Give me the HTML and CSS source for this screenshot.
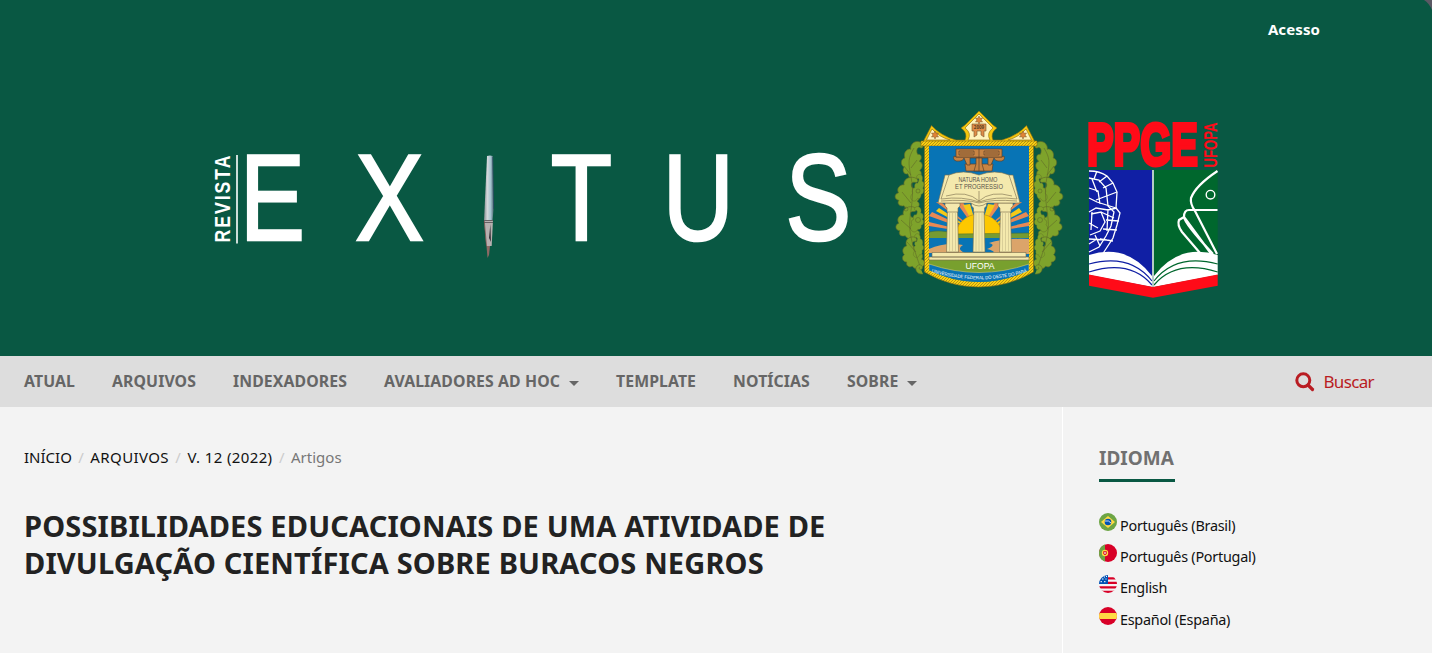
FILE: index.html
```html
<!DOCTYPE html>
<html lang="pt-BR">
<head>
<meta charset="utf-8">
<title>Revista Exitus</title>
<link rel="stylesheet" href="styles.css">
</head>
<body>
<header class="header">
  <svg class="corner" viewBox="0 0 8 10"><path d="M0 0H8V10Q5 3 0 0Z" fill="#5a5964"/></svg>
  <div class="user"><a>Acesso</a></div>
  <svg class="banner" viewBox="200 100 1030 210">
    <defs>
      <linearGradient id="pen"><stop offset="0" stop-color="#858d90"/><stop offset=".35" stop-color="#d5d8dc"/><stop offset=".7" stop-color="#a5c4d0"/><stop offset="1" stop-color="#536f78"/></linearGradient>
      <pattern id="rope" width="3" height="3" patternUnits="userSpaceOnUse"><rect width="3" height="3" fill="#f9cf12"/><path d="M0 3L3 0" stroke="#8a6d16" stroke-width=".6"/></pattern>
      <clipPath id="shield"><path d="M929 146H1029V270Q1005 282 979 282Q953 282 929 270Z"/></clipPath>
      <path id="leaf" d="M0 0C-5 2-8-1-9-4C-13-3-15-7-13-10C-17-11-17-17-13-18C-15-23-11-27-8-26C-9-31-4-35 1-33C5-31 4-27 1-28C-2-29-3-25-1-22C3-23 4-18 1-16C5-15 5-10 2-8C5-6 4-1 0 0Z"/>
      <g id="leaves" fill="#7ea32b" stroke="#5f6c28" stroke-width=".6">
        <use href="#leaf" transform="translate(917 179) rotate(4) scale(1.050 1.120)"/>
        <use href="#leaf" transform="translate(915 209) rotate(-3) scale(1.200 .95)"/>
        <use href="#leaf" transform="translate(916 238) rotate(-8) scale(1.150 .95)"/>
        <use href="#leaf" transform="translate(922 267) rotate(-18) scale(1 .95)"/>
        <use href="#leaf" transform="translate(912 200) rotate(16) scale(-.55 .8)"/>
        <use href="#leaf" transform="translate(912 231) rotate(12) scale(-.6 .75)"/>
        <use href="#leaf" transform="translate(915 257) rotate(4) scale(-.5 .7)"/>
        <path d="M921 269C914 249 908 234 910 218S914 192 911 177S908 158 914 148M911 175L904 166M911 168L917 160M911 203L902 192M911 229L901 220M916 252L907 242" fill="none"/>
        <circle cx="918" cy="220" r="2.500"/><circle cx="906" cy="209" r="2" fill="none"/><circle cx="918" cy="191" r="2"/>
        <path d="M923 274C917 275 914 269 917 266C920 263 924 266 922 269C920 271 918 268 920 267"/>
      </g>
      <path id="star" d="M0-4L1-1.700 3.500-2 2 0 3.500 2 1 1.700 0 4-1 1.700-3.500 2-2 0-3.500-2-1-1.700Z" fill="#e18335" stroke="#76552d" stroke-width=".5"/>
      <path id="ribbonline" d="M929.500 271.500Q979 287 1029 271.500"/>
    </defs>
    <g class="wordmark">
      <text transform="translate(272.300 239.800) scale(.79 1)">E</text>
      <text transform="translate(389.500 239.800) scale(.83 1)">X</text>
      <text transform="translate(581.300 239.800) scale(.815 1)">T</text>
      <text transform="translate(698.200 239.800) scale(.8 1)">U</text>
      <text transform="translate(818.300 239.800) scale(.8 1)">S</text>
    </g>
    <text class="revista" transform="translate(229.500 242.500) rotate(-90) scale(.785 1)">REVISTA</text>
    <path d="M237 155V243.500" stroke="#fff" stroke-width="1.600"/>
    <path d="M487 156Q490 155 492.700 156L493.500 210 492.500 221H484Z" fill="url(#pen)"/>
    <path d="M484 220H493L491.700 246H486.300Z" fill="#b7b0b0"/>
    <path d="M484 220.500H493M484 222.500H493" stroke="#433e43" stroke-width=".7"/>
    <path d="M490.400 224L491 242 489 238Z" fill="#38353b"/>
    <path d="M486.500 246H490L489 255 487.500 258Z" fill="#8d6964"/>
    <path d="M492.700 157L493.600 209" stroke="#314b67" stroke-width=".8"/>
    <path d="M484.300 221L486.500 246" stroke="#7b4745" stroke-width=".7"/>

    <use href="#leaves"/><use href="#leaves" transform="translate(1958 0) scale(-1 1)"/>
    <g stroke="#8b6b13" stroke-width=".6">
      <path d="M923 142L931.500 125.500Q941 136 956 140H965Q968 133 961 128L965 125 979 111 993 125 997 128Q990 133 993 140H1002Q1017 136 1026.500 125.500L1035 142Z" fill="#f5c70e"/>
      <path d="M926.500 140L932 129Q939 137 950 140ZM968 140Q972 133 965 128L979 114 993 128Q986 133 990 140ZM1031.500 140L1026 129Q1019 137 1008 140Z" fill="#fff3bb"/>
      <path d="M924.500 144H1033.500V272Q1008 287 979 287Q950 287 924.500 272Z" fill="url(#rope)"/>
      <path d="M921 141H1037V146H921Z" fill="url(#rope)"/>
    </g>
    <use href="#star" x="935" y="135"/><use href="#star" x="1023" y="135"/><use href="#star" x="979" y="120"/>
    <path d="M972 124H986V131H984V137L981 135V131H977V135L974 137V131H972Z" fill="#df8c48" stroke="#76552d" stroke-width=".6"/>
    <text x="979" y="129.300" text-anchor="middle" font-size="4.500" font-weight="bold" fill="#583f22">2009</text>
    <g clip-path="url(#shield)">
      <path d="M929 146H1029V290H929Z" fill="#0874b5"/>
      <g fill="#e98954"><path d="M979 234L929 216 932 212Z"/><path d="M979 234L936 202 941 202Z"/><path d="M979 234L956 202 963 202Z"/><path d="M979 234L975 202 983 202Z"/><path d="M979 234L995 202 1002 202Z"/><path d="M979 234L1017 202 1022 202Z"/><path d="M979 234L1026 212 1029 216Z"/><path d="M979 234L929 226 929 222Z"/><path d="M979 234L1029 222V226Z"/></g>
      <g fill="#f7c917"><path d="M979 234L936 211 939 208Z"/><path d="M979 234L963 205 970 204Z"/><path d="M979 234L988 204 995 205Z"/><path d="M979 234L1019 208 1022 212Z"/></g>
      <circle cx="979" cy="238" r="24" fill="#fdc800" stroke="#9a7d2a" stroke-width=".5"/>
      <path d="M929 232Q942 229 955 234L1029 233V239H929Z" fill="#769b32" stroke="#4c6c26" stroke-width=".5"/>
      <path d="M929 238H1029V255H929Z" fill="#0874b5"/>
      <path d="M929 249Q945 242 963 245Q956 249 965 253H929ZM1029 239Q1003 238 989 243Q997 245 987 249Q999 252 990 254H1029Z" fill="#dba46a"/>
      <path d="M929 260H1029V275Q979 289 929 275Z" fill="#78a02e"/>
      <path d="M929 264Q979 281 1029 264V288H929Z" fill="#0874b5" stroke="#f1d66f" stroke-width=".5"/>
    </g>
    <g fill="#f4e9ad" stroke="#76694a" stroke-width=".6">
      <path d="M929 257H1029V260H929ZM932 252.500H1026V257H932Z"/>
      <path d="M947.500 207H957.500L958.500 252H946.500ZM974 207H984L985 252H973ZM1000.500 207H1010.500L1011.500 252H999.500Z"/>
      <path d="M945 203H960V206L958 208V212H947V208L945 206ZM971.500 203H986.500V206L984.500 208V212H973.500V208L971.500 206ZM998 203H1013V206L1011 208V212H1000V208L998 206Z"/>
      <path d="M949.500 213V251M952.500 213V251M955.500 213V251M976 213V251M979 213V251M982 213V251M1002.500 213V251M1005.500 213V251M1008.500 213V251" opacity=".35"/>
      <path d="M945 175L938 203H971Q979 209 987 203H1020L1013 175H1009Q995 169 979 175Q963 169 949 175Z"/>
      <path d="M949 175L941 199Q963 196 979 202Q995 196 1017 199L1009 175M941 201Q966 199 979 203Q992 199 1017 201M979 191V202M946 196Q967 190 979 201Q991 190 1012 196" fill="none"/>
    </g>
    <g fill="#c88443" stroke="#59412d" stroke-width=".7">
      <path d="M965 164H993L992 171H966Z"/>
      <path d="M954 156Q952 162 960 161Q963 161 964 158L967 165H970V158H988V165H991L994 158Q995 161 998 161Q1006 162 1004 156L1002 157H956Z"/>
      <path d="M956 149H1002V157H956Z"/><path d="M976 158H982V164L984 171H974L976 164Z"/>
      <path d="M959 151H974V155H959ZM984 151H999V155H984ZM960 153H973M985 153H998M979 149V171" fill="none"/>
    </g>
    <g font-family="Liberation Sans, sans-serif" fill="#56534a" font-size="6.500"><text x="958.500" y="181.500" textLength="39" lengthAdjust="spacingAndGlyphs">NATURA HOMO</text><text x="955" y="188.500" textLength="48" lengthAdjust="spacingAndGlyphs">ET PROGRESSIO</text></g>
    <text class="ufopa-label" x="965.500" y="269" textLength="29" lengthAdjust="spacingAndGlyphs">UFOPA</text>
    <text class="ribbon"><textPath href="#ribbonline" startOffset="2" textLength="97" lengthAdjust="spacingAndGlyphs">UNIVERSIDADE FEDERAL DO OESTE DO PARÁ</textPath></text>

    <text class="ppge" transform="translate(1087 164.800) scale(.665 1)">PPGE</text>
    <text class="side-label" transform="translate(1217 167.500) rotate(-90)" textLength="45" lengthAdjust="spacingAndGlyphs">UFOPA</text>
    <path d="M1089 170H1152V287L1089 275Z" fill="#101fa4"/><path d="M1154 170H1217.700V275L1154 287Z" fill="#00672d"/>
    <g fill="none" stroke="#fff" stroke-width="1.300">
      <path d="M1089 171Q1100 171 1107 176L1113 183 1117 192 1116 208 1120 213 1117 225 1113 238 1102 255M1089 178L1099 180 1106 188 1108 206 1114 212 1111 226 1106 236 1099 247 1089 252"/>
      <path d="M1097 171L1094 179M1107 176L1099 182M1113 183L1103 188M1117 192L1096 200M1089 188L1098 191 1100 204M1089 198L1097 202 1116 208M1092 179L1097 192M1089 212L1096 208 1108 210 1117 208M1091 214L1101 212 1105 222 1100 231 1090 235M1092 212L1091 230M1089 239L1107 240M1095 235L1100 246M1106 220L1119 221M1103 229L1117 230M1100 239L1113 241M1108 209L1107 231M1089 244L1097 239M1101 212L1114 218M1089 223L1098 228"/>
    </g>
    <g fill="none" stroke="#fff" stroke-width="2.200" stroke-linejoin="round">
      <path d="M1217.500 171C1204 180 1194 190 1191 198Q1190 204 1195 211L1217 254M1217.500 210H1189Q1184 210 1184 217L1179 220Q1177 225 1182 232L1200 253M1184 217L1212 255M1184 217Q1185 224 1213 254"/>
      <circle cx="1210.500" cy="194.700" r="4.300" stroke-width="1.400"/>
    </g>
    <path d="M1089 255Q1127 243 1152 276V287L1089 275ZM1217.700 255Q1179 243 1154 276V287L1217.700 275Z" fill="#fff"/>
    <path d="M1089 264Q1130 253 1152 281M1089 272Q1130 259 1152 285" fill="none" stroke="#101fa4" stroke-width="1.200"/><path d="M1217.700 264Q1176 253 1154 281M1217.700 272Q1176 259 1154 285" fill="none" stroke="#00672d" stroke-width="1.200"/>
    <path d="M1153 170V288" stroke="#fff" stroke-width="1.400"/>
    <path d="M1089 274.500L1153 287 1217.700 274.500V285.700L1153 297.700 1089 285.700Z" fill="#ff0b18"/>
  </svg>
</header>
<nav class="nav">
  <a>ATUAL</a><a>ARQUIVOS</a><a>INDEXADORES</a><a>AVALIADORES AD HOC<i class="caret"></i></a><a>TEMPLATE</a><a>NOTÍCIAS</a><a>SOBRE<i class="caret"></i></a>
  <a class="search"><svg viewBox="0 0 20 20"><circle cx="8.300" cy="8.300" r="6.500" fill="none" stroke="#b91c22" stroke-width="3"/><path d="M13 13L17.500 17.500" stroke="#b91c22" stroke-width="3.200" stroke-linecap="round"/></svg><span>Buscar</span></a>
</nav>
<div class="body">
  <main>
    <div class="crumbs"><a>INÍCIO</a><i>/</i><a class="wide">ARQUIVOS</a><i>/</i><a class="wide">V. 12 (2022)</a><i>/</i><span>Artigos</span></div>
    <h1>POSSIBILIDADES EDUCACIONAIS DE UMA ATIVIDADE DE<br>DIVULGAÇÃO CIENTÍFICA SOBRE BURACOS NEGROS</h1>
  </main>
  <aside>
    <h2>IDIOMA</h2>
    <ul>
      <li><svg viewBox="0 0 18 18"><circle cx="9" cy="9" r="9" fill="#6da544"/><path d="M9 3L16 9 9 15 2 9Z" fill="#ffda44"/><circle cx="9" cy="9" r="3.300" fill="#0052b4"/><path d="M6 8Q10 7 12 10" fill="none" stroke="#fff" stroke-width=".8"/></svg><span>Português (Brasil)</span></li>
      <li><svg viewBox="0 0 18 18"><circle cx="9" cy="9" r="9" fill="#d80027"/><path d="M6 .5A9 9 0 0 0 6 17.500Z" fill="#6da544"/><circle cx="6" cy="9" r="3.200" fill="#ffda44"/><path d="M4.300 7.200H7.700V9.500Q6 12.500 4.300 9.500Z" fill="#d80027"/><path d="M5.200 8.200H6.800V9.700H5.200Z" fill="#fff"/></svg><span>Português (Portugal)</span></li>
      <li><svg viewBox="0 0 18 18"><clipPath id="round"><circle cx="9" cy="9" r="9"/></clipPath><g clip-path="url(#round)"><path d="M0 0H18V18H0Z" fill="#f5f5f5"/><path d="M8 2.200H18V4.500H8ZM8 6.700H18V9H8ZM0 11.200H18V13.500H0ZM0 15.700H18V18H0Z" fill="#d80027"/><path d="M0 0H9V9H0Z" fill="#0052b4"/><path d="M5 2H6M3 4H4.500M6.500 4H7.500M1.500 6.700H3M5 6.700H6.500M7 1.500H8" stroke="#fff" stroke-width="1"/></g></svg><span>English</span></li>
      <li><svg viewBox="0 0 18 18"><circle cx="9" cy="9" r="9" fill="#d80027"/><path d="M.6 5.900H17.400Q18.600 9 17.400 12.100H.6Q-.6 9 .6 5.900Z" fill="#ffda44"/></svg><span>Español (España)</span></li>
    </ul>
  </aside>
</div>
</body>
</html>
```
FILE: styles.css
```css
* { box-sizing: border-box; }
body { margin: 0; height: 653px; overflow: hidden; background: #f3f3f3; color: #111; font-family: "Noto Sans", "Open Sans", sans-serif; white-space: nowrap; }
.header { position: relative; height: 356px; background: #095843; }
.corner { position: absolute; top: 0; right: 0; width: 8px; height: 10px; }
.user { height: 100px; padding: 19px 112px 0 0; text-align: right; color: #fff; font-weight: 700; font-size: 15px; line-height: 21px; letter-spacing: .1px; }
.banner { display: block; width: 1030px; height: 210px; margin-left: 200px; }
.wordmark text { font: 123px "Liberation Sans", sans-serif; fill: #fff; stroke: #fff; stroke-width: 2.6px; text-anchor: middle; }
.revista { font: bold 22.5px "Liberation Sans", sans-serif; fill: #fff; letter-spacing: 2.5px; }
.ufopa-label { font: 9px "Liberation Sans", sans-serif; fill: #fff; }
.ribbon { font: 4.8px "Liberation Sans", sans-serif; fill: #fff; }
.ppge { font: bold 60px "Liberation Sans", sans-serif; fill: #ff0b18; stroke: #ff0b18; stroke-width: 4px; }
.side-label { font: bold 18px "Liberation Sans", sans-serif; fill: #ff0b18; }
.nav { display: flex; align-items: center; height: 51px; padding: 0 58px 1px 24px; background: #ddd; color: #666; font-size: 15.8px; font-weight: 700; }
.nav > a { margin-right: 37px; letter-spacing: .1px; }
.caret { display: inline-block; margin-left: 9px; border: 5px solid transparent; border-top-color: #666; border-bottom: 0; vertical-align: 1px; }
.nav .search { display: flex; align-items: center; margin: 1px 0 0 auto; color: #b91c22; font-size: 17px; font-weight: 400; letter-spacing: -.65px; }
.search svg { width: 20px; height: 20px; margin-right: 8px; }
.body { display: flex; height: 246px; }
main { width: 1062px; padding: 38px 24px; }
.crumbs { display: flex; font-size: 15px; line-height: 24px; }
.crumbs i { width: 18.5px; text-align: center; color: #ccc; font-style: normal; }
.crumbs .wide { letter-spacing: .38px; }
.crumbs span { color: #777; }
h1 { margin: 38px 0 0; color: #222; font-size: 29px; line-height: 37px; letter-spacing: .16px; }
aside { flex: 1; border-left: 1px solid #fff; padding: 37px 36px; }
h2 { width: 76px; height: 38px; margin: 0; border-bottom: 3px solid #095843; color: #707070; font-size: 19px; line-height: 28px; }
ul { list-style: none; margin: 27px 0 0; padding: 0; }
li { display: flex; height: 31.2px; font-size: 14.4px; line-height: 33px; letter-spacing: -.26px; }
li svg { width: 18px; height: 18px; margin: 4px 3px 0 0; }
```
